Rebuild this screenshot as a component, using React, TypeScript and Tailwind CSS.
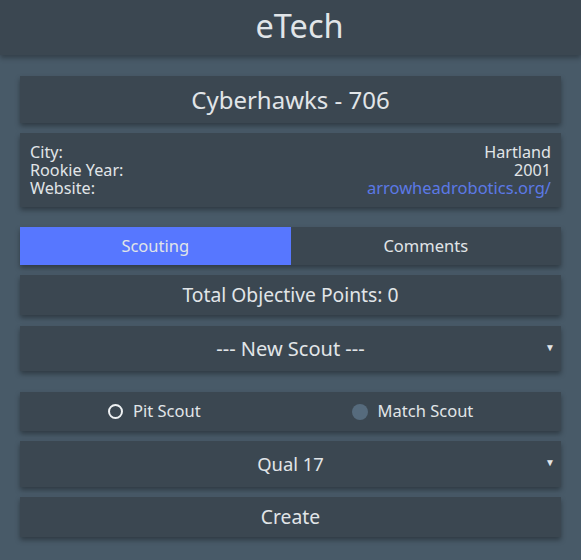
import React from "react";

const card = "bg-[#3b4751] shadow-[0_3px_5px_rgba(0,0,0,0.35)]";

export default function App() {
  return (
    <div
      className="min-h-[560px] bg-[#485a68] text-[#e1e5e8]"
      style={{ fontFamily: '"Noto Sans", "Open Sans", sans-serif' }}
    >
      <header className={`h-[55px] flex items-center justify-center bg-[#3b4751] shadow-[0_3px_5px_rgba(0,0,0,0.3)] pl-[18px]`}>
        <h1 className="text-[32.5px] leading-none pb-[2px]">eTech</h1>
      </header>
      <main className="px-[20px] pt-[21px] flex flex-col">
        <div className={`${card} h-[47px] flex items-center justify-center text-[24px]`}>
          Cyberhawks - 706
        </div>
        <div className={`${card} mt-[10px] h-[74px] px-[10px] py-[10px] text-[16.2px] leading-[18px] flex justify-between`}>
          <div className="flex flex-col">
            <span>City:</span>
            <span>Rookie Year:</span>
            <span>Website:</span>
          </div>
          <div className="flex flex-col items-end">
            <span>Hartland</span>
            <span>2001</span>
            <a className="text-[#5b79e6] text-[16.5px]">arrowheadrobotics.org/</a>
          </div>
        </div>
        <div className={`${card} mt-[20px] h-[38px] grid grid-cols-2 text-[16.5px]`}>
          <div className="bg-[#5777ff] flex items-center justify-center">Scouting</div>
          <div className="flex items-center justify-center">Comments</div>
        </div>
        <div className={`${card} mt-[10px] h-[40px] flex items-center justify-center text-[19.3px]`}>
          Total Objective Points: 0
        </div>
        <div className={`${card} mt-[11px] h-[45px] relative flex items-center justify-center text-[20px]`}>
          --- New Scout ---
          <span className="absolute right-[6px] top-[14px] text-[10px]">▼</span>
        </div>
        <div className={`${card} mt-[21px] h-[39px] flex items-center text-[16.5px]`}>
          <div className="flex items-center gap-[10px] ml-[88px]">
            <span className="w-[15px] h-[15px] rounded-full border-2 border-[#eef1f3]"></span>
            <span>Pit Scout</span>
          </div>
          <div className="flex items-center gap-[10px] ml-[151px]">
            <span className="w-[16px] h-[16px] rounded-full bg-[#566b7d]"></span>
            <span>Match Scout</span>
          </div>
        </div>
        <div className={`${card} mt-[10px] h-[46px] relative flex items-center justify-center text-[18.4px]`}>
          Qual 17
          <span className="absolute right-[6px] top-[14px] text-[10px]">▼</span>
        </div>
        <div className={`${card} mt-[10px] h-[40px] flex items-center justify-center text-[19.3px]`}>
          Create
        </div>
      </main>
    </div>
  );
}
